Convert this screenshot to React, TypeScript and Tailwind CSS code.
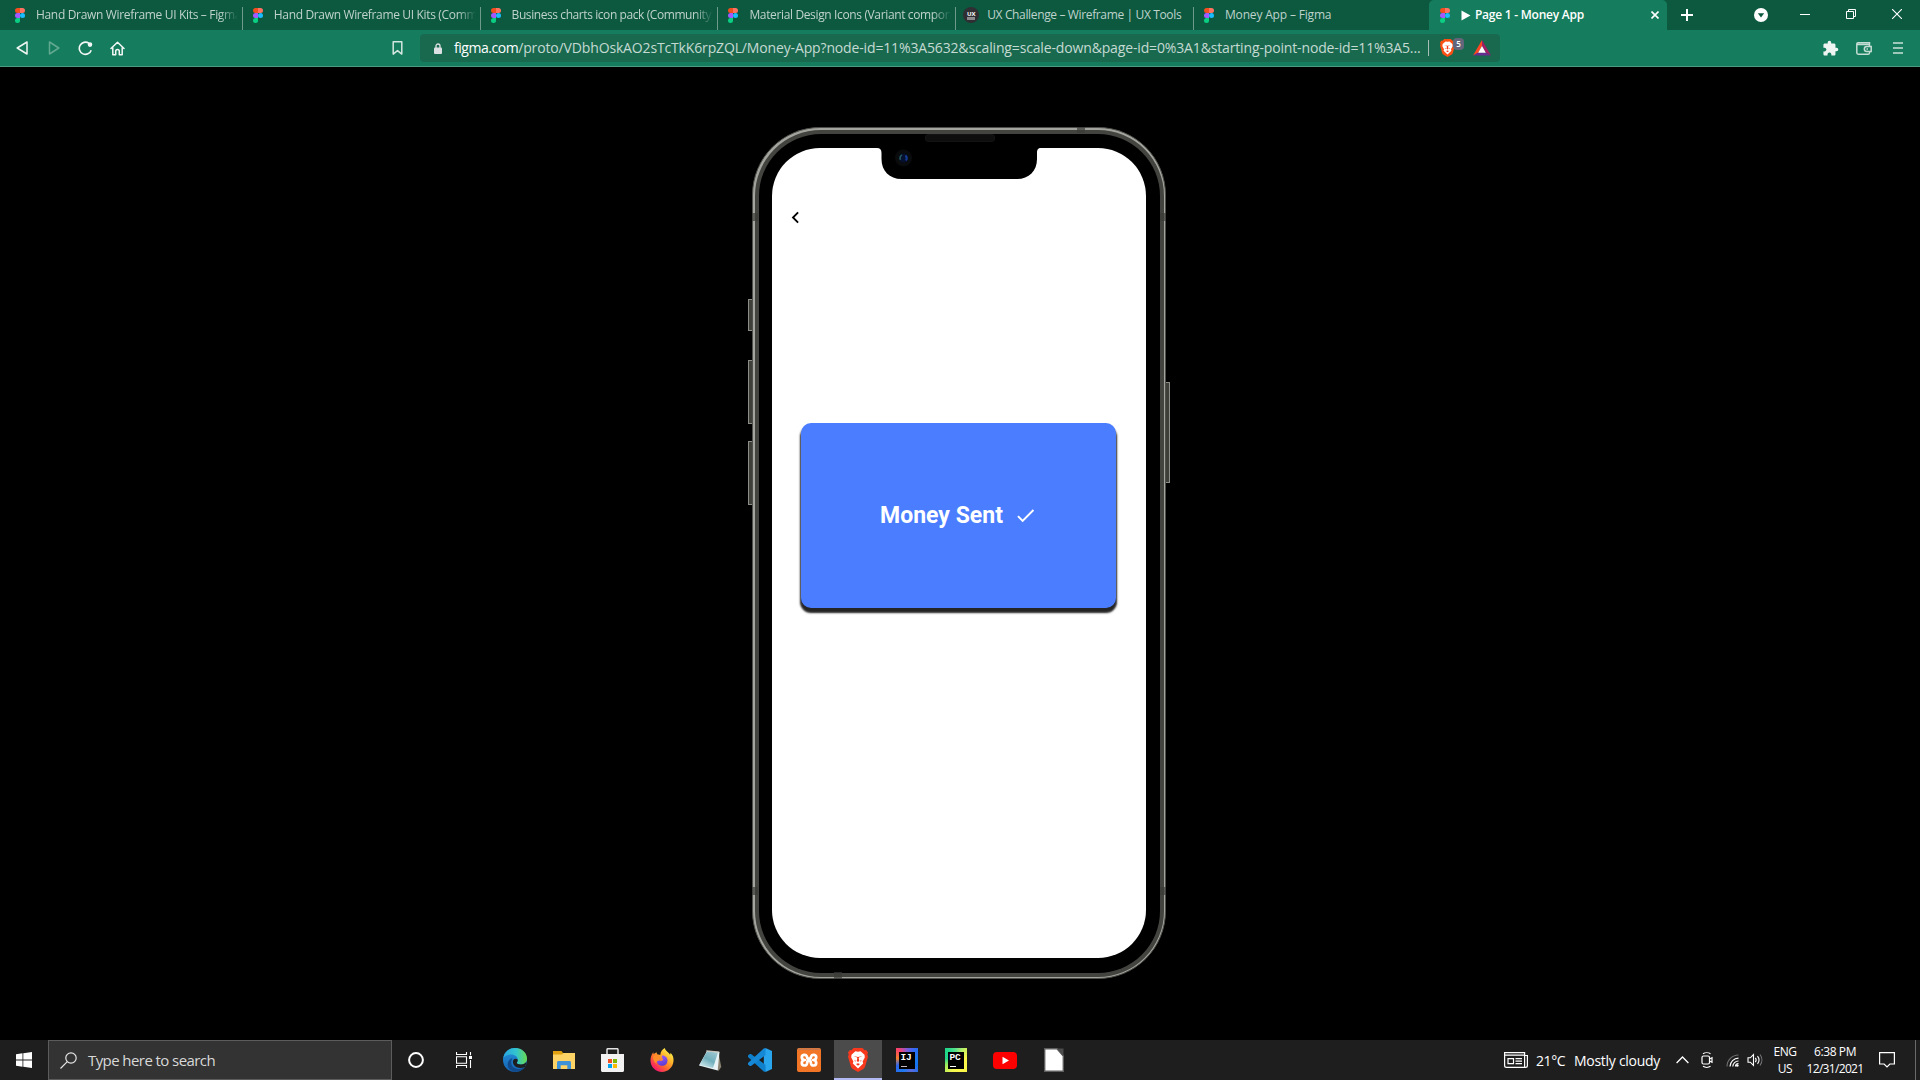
import React from "react";

/* ---------- Browser icons ---------- */

function FigmaLogo() {
  return (
    <svg width="10" height="15" viewBox="0 0 10 15" className="shrink-0">
      <path d="M2.5 0H5v5H2.5a2.5 2.5 0 0 1 0-5z" fill="#f24e1e" />
      <path d="M5 0h2.5a2.5 2.5 0 0 1 0 5H5z" fill="#ff7262" />
      <path d="M2.5 5H5v5H2.5a2.5 2.5 0 0 1 0-5z" fill="#a259ff" />
      <circle cx="7.5" cy="7.5" r="2.5" fill="#1abcfe" />
      <path d="M2.5 10H5v2.5A2.5 2.5 0 1 1 2.5 10z" fill="#0acf83" />
    </svg>
  );
}

function UxToolsLogo() {
  return (
    <span className="flex h-4 w-4 shrink-0 flex-col items-center justify-center rounded-full bg-[#2f2f33] text-[6px] leading-[6px] font-bold text-white">
      <span>UX</span>
      <span className="h-[3px] w-[8px] bg-[#8b8b8e]" />
    </span>
  );
}

function BraveLion({ width, height, light }: { width: number; height: number; light?: boolean }) {
  return (
    <svg width={width} height={height} viewBox="0 0 20 24" className="shrink-0">
      <path
        d="M5.5 0h9l2 2.3 1.6-.2L20 4.6l-.7 2 .7 2.2-2.8 9.4c-.3 1.2-1 2-2 2.7L10 24l-5.2-3.100c-1-.7-1.700-1.500-2-2.700L0 8.800l.7-2.200-.7-2 1.900-2.500 1.600.2z"
        fill={light ? "#fb4f14" : "#f8391d"}
      />
      <path d="M10 3.700l2.600-.5 3.900 3.600.3 2.800-2.200 4 .6 1.900-5.200 5-5.200-5 .6-1.900-2.200-4 .3-2.800 3.900-3.600z" fill="#fff" />
      <path
        d="M5.500 8.300l3.200 1 .6 1-.6 2.800 1.300.9 1.300-.9-.6-2.800.6-1 3.200-1-2.300.2L10 9.100l-2.200-.6zM6.300 12.200l1.700.5-.8 1zM13.700 12.200l-1.700.5.8 1zM8 16l2-.8 2 .8-2 1.700z"
        fill="#f8391d"
      />
    </svg>
  );
}

/* ---------- Tab strip ---------- */

interface Tab {
  title: string;
  tracking: string;
  fade?: boolean;
  ux?: boolean;
  last?: boolean;
}

const tabs: Tab[] = [
  { title: "Hand Drawn Wireframe UI Kits – Figma", tracking: "tracking-[-0.33px]", fade: true },
  { title: "Hand Drawn Wireframe UI Kits (Community)", tracking: "tracking-[-0.34px]", fade: true },
  { title: "Business charts icon pack (Community)", tracking: "tracking-[-0.42px]", fade: true },
  { title: "Material Design Icons (Variant components)", tracking: "tracking-[-0.36px]", fade: true },
  { title: "UX Challenge – Wireframe | UX Tools", tracking: "tracking-[-0.36px]", ux: true },
  { title: "Money App – Figma", tracking: "tracking-[-0.17px]", last: true },
];

function TabStrip() {
  return (
    <div className="flex h-[30px] bg-[#0c5940] pl-[5px]">
      {tabs.map((t) => (
        <div key={t.title} className={`flex shrink-0 items-end ${t.last ? "w-[235px]" : "w-[237.8px]"}`}>
          <div className={`flex h-[30px] min-w-0 flex-1 items-center pr-1 ${t.ux ? "gap-2 pl-[7px]" : "gap-[11px] pl-[10px]"}`}>
            {t.ux ? <UxToolsLogo /> : <FigmaLogo />}
            <span
              className={`flex-1 overflow-hidden text-[12px] leading-[30px] whitespace-nowrap text-[#bfd2cb] ${t.tracking} ${t.fade ? "[mask-image:linear-gradient(to_right,black_91%,transparent)]" : ""}`}
            >
              {t.title}
            </span>
          </div>
          {!t.last && <span className="h-[23px] w-px bg-[#6f9a8b]" />}
        </div>
      ))}
      <div className="flex w-[238px] shrink-0 items-center rounded-t-[5px] bg-[#157d5d] pr-2 pl-[11px]">
        <FigmaLogo />
        <svg width="10" height="11" viewBox="0 0 10 11" className="ml-[11px] shrink-0">
          <path d="M.5.5v10l9-5z" fill="#fff" />
        </svg>
        <span className="ml-1 flex-1 text-[12px] leading-[30px] font-semibold tracking-[-0.24px] whitespace-nowrap text-white">
          Page 1 - Money App
        </span>
        <svg width="8" height="8" viewBox="0 0 8 8" stroke="#fff" strokeWidth="1.6">
          <path d="M.5.5l7 7M7.5.5l-7 7" />
        </svg>
      </div>
      <div className="flex flex-1 items-center">
        <svg width="12" height="12" viewBox="0 0 12 12" className="ml-[14px]" stroke="#fff" strokeWidth="2">
          <path d="M6 0v12M0 6h12" />
        </svg>
        <svg width="14" height="14" viewBox="0 0 14 14" className="ml-[61px]">
          <circle cx="7" cy="7" r="7" fill="#fff" />
          <path d="M3.800 5.200h6.400L7 9.600z" fill="#0c5940" />
        </svg>
        <svg width="10" height="10" viewBox="0 0 10 10" className="ml-8" stroke="#fff">
          <path d="M0 4.500h10" />
        </svg>
        <svg width="10" height="10" viewBox="0 0 10 10" className="mb-[2px] ml-9" stroke="#fff" fill="none">
          <path d="M.5 2.500h7v7h-7zM2.500 2.500v-2h7v7h-2" />
        </svg>
        <svg width="10" height="10" viewBox="0 0 10 10" className="mb-[2px] ml-9" stroke="#fff" strokeWidth="1.1">
          <path d="M0 0l10 10M10 0L0 10" />
        </svg>
      </div>
    </div>
  );
}

/* ---------- Toolbar ---------- */

function Toolbar() {
  return (
    <div className="flex h-[37px] items-center border-b border-[#4a9a80] bg-[#157d5d]">
      <svg width="12" height="14" viewBox="0 0 12 14" className="ml-4" fill="none" stroke="#eef5f2" strokeWidth="1.5" strokeLinejoin="round">
        <path d="M11 1v12L1.200 7z" />
      </svg>
      <svg width="12" height="14" viewBox="0 0 12 14" className="ml-5" fill="none" stroke="#62a891" strokeWidth="1.5" strokeLinejoin="round">
        <path d="M1.500 1v12l9.300-6z" />
      </svg>
      <svg width="15" height="15" viewBox="0 0 15 15" className="ml-[18px]" fill="none" stroke="#f3f8f6" strokeWidth="1.6">
        <path d="M10.800 2.200A6.100 6.100 0 1 0 13.200 9.200" />
        <circle cx="12" cy="3.600" r="1.500" fill="#f3f8f6" />
      </svg>
      <svg width="15" height="15" viewBox="0 0 15 15" className="ml-[17px]" fill="none" stroke="#f3f8f6" strokeWidth="1.5" strokeLinejoin="round" strokeLinecap="round">
        <path d="M1 7.500L7.500 1.200 14 7.500M2.800 6.500v7.300h2.900v-3.500a1.800 1.800 0 0 1 3.600 0v3.500h2.900V6.500" />
      </svg>
      <svg width="11" height="14" viewBox="0 0 11 14" className="ml-[267px]" fill="none" stroke="#d3e6df" strokeWidth="1.5" strokeLinejoin="round">
        <path d="M1.200.8h8.600v12.300L5.500 9.600l-4.300 3.500z" />
      </svg>
      <div className="ml-[17px] flex h-7 w-[1080px] items-center rounded-[4px] bg-[#19694f]">
        <svg width="8" height="11" viewBox="0 0 8 11" className="ml-[14px] shrink-0">
          <path d="M2 5V3a2 2 0 0 1 4 0v2" fill="none" stroke="#dbe1e2" strokeWidth="1.3" />
          <rect y="4.500" width="8" height="6.500" rx="1" fill="#dbe1e2" />
        </svg>
        <span className="ml-3 w-[968px] text-[14px] leading-7 whitespace-nowrap text-[#c5dad2]">
          <span className="tracking-[-0.46px] text-white">figma.com</span>
          <span className="tracking-[-0.148px]">
            /proto/VDbhOskAO2sTcTkK6rpZQL/Money-App?node-id=11%3A5632&amp;scaling=scale-down&amp;page-id=0%3A1&amp;starting-point-node-id=11%3A5...
          </span>
        </span>
        <span className="ml-[6px] h-4 w-px bg-[#a7bfb6]" />
        <div className="relative ml-[11px]">
          <BraveLion width={15} height={18} light />
          <span className="absolute -top-px left-[13px] flex h-3 w-[11px] items-center justify-center rounded-[4px] bg-[#63657a] text-[8px] leading-none font-semibold text-white">
            5
          </span>
        </div>
        <svg width="18" height="16" viewBox="0 0 18 16" className="ml-[18px]">
          <path d="M9 0L0 15.500l5.500-3L9 6z" fill="#ff4724" />
          <path d="M9 0l9 15.500-5.500-3L9 6z" fill="#9e1f63" />
          <path d="M0 15.500l5.500-3h7l5.500 3z" fill="#662d91" />
          <path d="M9 6l3.800 6.700H5.200z" fill="#fff" />
        </svg>
      </div>
      <svg width="17" height="17" viewBox="0 0 24 24" className="ml-[322px]" fill="#eef4f2">
        <path d="M20.500 11H19V7c0-1.100-.9-2-2-2h-4V3.500a2.500 2.500 0 0 0-5 0V5H4c-1.100 0-1.990.9-1.990 2v3.800H3.500c1.490 0 2.700 1.210 2.700 2.700s-1.210 2.700-2.700 2.700H2V20c0 1.100.9 2 2 2h3.800v-1.500c0-1.490 1.210-2.700 2.700-2.700 1.490 0 2.700 1.210 2.700 2.700V22H17c1.100 0 2-.9 2-2v-4h1.500a2.500 2.500 0 0 0 0-5z" />
      </svg>
      <svg width="16" height="14" viewBox="0 0 16 14" className="ml-[17px]" fill="none" stroke="#c4ddd4" strokeWidth="1.5">
        <path d="M13.500 3.500V1.800H2A1.200 1.200 0 0 0 .8 3v8.800c0 .8.600 1.400 1.400 1.400h10c.8 0 1.400-.6 1.400-1.400v-1M1 3.500h12.500v2" />
        <path d="M15.200 5.600h-4.400a2.200 2.200 0 0 0 0 4.900h4.400z" />
        <path d="M10.500 8H12" />
      </svg>
      <svg width="10" height="12" viewBox="0 0 10 12" className="ml-[21px]" stroke="#c9dfd7" strokeWidth="1.6">
        <path d="M0 1h10M0 6h10M0 11h10" />
      </svg>
    </div>
  );
}

/* ---------- Phone ---------- */

function Phone() {
  return (
    <div className="relative h-[852px] w-[414px] rounded-[68px] border border-[#4e4e4a] bg-[#a4a49e] p-[1.5px]">
      {/* side buttons */}
      <span className="absolute top-[171px] -left-[5px] h-8 w-1 border border-r-0 border-[#8d8d87] bg-[#3f3f3a]" />
      <span className="absolute top-[232px] -left-[5px] h-16 w-1 border border-r-0 border-[#8d8d87] bg-[#3f3f3a]" />
      <span className="absolute top-[313px] -left-[5px] h-16 w-1 border border-r-0 border-[#8d8d87] bg-[#3f3f3a]" />
      <span className="absolute top-[254px] -right-[5px] h-[101px] w-1 border border-l-0 border-[#8d8d87] bg-[#3f3f3a]" />
      <div className="h-full rounded-[66px] bg-[#43433f] p-1">
        <div className="h-full rounded-[62px] bg-black px-[13.5px] pt-[14.5px] pb-[14.5px]">
          <div className="relative flex h-full flex-col rounded-[48px] bg-white">
            <svg width="23" height="23" viewBox="0 0 24 24" className="mt-[57.5px] ml-[12px]">
              <path d="M15.410 7.410L14 6l-6 6 6 6 1.410-1.410L10.830 12z" fill="#000" />
            </svg>
            <div className="mt-[194px] ml-[29px] flex h-[185px] w-[315px] items-center justify-center rounded-[10px] bg-[#4a7dff] shadow-[0_4px_2px_1px_rgba(0,0,0,0.86)]">
              <span className="font-[Roboto,sans-serif] text-[23px] leading-none font-bold whitespace-nowrap text-white">Money Sent</span>
              <svg width="23" height="23" viewBox="0 0 24 24" className="ml-[11px]">
                <path d="M9 16.170L4.830 12l-1.420 1.410L9 19 21 7l-1.410-1.410z" fill="#fff" />
              </svg>
            </div>
            {/* notch with front camera */}
            <svg width="164" height="33" viewBox="0 0 164 33" className="absolute -top-px left-[105px]">
              <path d="M0 0h164v1c-3 0-4 1.500-4 5v6c0 12-8 20-20 20H24.500c-12 0-20-8-20-20V6C4.500 2.500 3 1 0 1z" fill="#000" />
              <circle cx="26.500" cy="11" r="8.500" fill="#0a0b0d" />
              <circle cx="26.500" cy="11" r="4.500" fill="#04102e" />
              <path d="M25 7.800a4 4 0 0 0-1.500 5" fill="none" stroke="#25585c" strokeWidth="1.6" />
              <path d="M28.500 8.500a4 4 0 0 1 .5 5" fill="none" stroke="#153b93" strokeWidth="2" />
            </svg>
            <span className="absolute -top-[14px] left-[153px] h-2 w-[70px] rounded-[3px] border border-[#131313] bg-[#0e0e0e]" />
          </div>
        </div>
      </div>
      {/* antenna bands */}
      <span className="absolute top-[85px] -left-px h-2 w-[6px] bg-[#3a3a37]/70" />
      <span className="absolute top-[85px] -right-px h-2 w-[6px] bg-[#3a3a37]/70" />
      <span className="absolute top-[759px] -left-px h-2 w-[6px] bg-[#3a3a37]/70" />
      <span className="absolute top-[759px] -right-px h-2 w-[6px] bg-[#3a3a37]/70" />
      <span className="absolute -top-px left-[324px] h-[6px] w-2 bg-[#3a3a37]/70" />
      <span className="absolute -bottom-px left-[81px] h-[7px] w-2 bg-[#3a3a37]/70" />
    </div>
  );
}

/* ---------- Taskbar icons ---------- */

function EdgeIcon() {
  return (
    <svg width="24" height="24" viewBox="0 0 24 24">
      <defs>
        <linearGradient id="edge-top" x1="0" y1="0.5" x2="1" y2="0.5">
          <stop offset="0" stopColor="#2aa5e0" />
          <stop offset="0.55" stopColor="#32c4cf" />
          <stop offset="1" stopColor="#68db4d" />
        </linearGradient>
        <linearGradient id="edge-left" x1="0" y1="0" x2="0" y2="1">
          <stop offset="0" stopColor="#2494dc" />
          <stop offset="1" stopColor="#1461b2" />
        </linearGradient>
      </defs>
      <circle cx="12" cy="12" r="12" fill="url(#edge-left)" />
      <path d="M.2 10C1.300 4 6 0 12 0c7 0 12 5 12 10.500 0 4-3 6-6.200 6-2.300 0-4-.8-4-1.700 0-.6 1-1.100 1-2.900C14.800 9 12 6.600 8 6.600 4.500 6.600 1.800 8 .2 10z" fill="url(#edge-top)" />
      <path d="M8.500 12.500C7 19 12.500 21.700 17 21c2-.3 4-1.200 4.800-1.900C19.500 22.500 15.500 24 12 24c-4.500-1-7.300-4-7.300-7.500 0-3.400 2-5.400 4.800-6.500-.6.800-.8 1.500-1 2.500z" fill="#114a8b" />
      <path d="M13.800 14.800c0 .9 1.700 1.700 4 1.700 2.500 0 4.700-1 5.700-3-.2 2.200-.8 4-1.700 5.600-6 2.400-12-.6-11.900-5.400 0-1.600 1-3 2.700-3 1.400 0 2.200.8 2.200 1.600 0 1.200-1 1.700-1 2.500z" fill="#1e1e1e" />
    </svg>
  );
}

function ExplorerIcon() {
  return (
    <svg width="22" height="18" viewBox="0 0 22 18">
      <path d="M0 0h8.500L10 2h12v4H0z" fill="#e0a010" />
      <path d="M0 3.500h9L10.500 2H22v16H0z" fill="#fdd365" />
      <path d="M4 18v-6.500c0-.8.700-1.500 1.500-1.500h11c.8 0 1.500.7 1.500 1.500V18h-3.700v-3.700H7.700V18z" fill="#3e93d8" />
    </svg>
  );
}

function StoreIcon() {
  return (
    <svg width="24" height="24" viewBox="0 0 24 24">
      <path d="M6 7V1.700c0-.6.400-1 1-1h9c.6 0 1 .4 1 1V7" fill="none" stroke="#e4e4e4" strokeWidth="1.5" />
      <path d="M0 6h23v16.500c0 .8-.7 1.500-1.500 1.500h-20C.7 24 0 23.300 0 22.500z" fill="#f2f2f2" />
      <path d="M7 11h4v4H7z" fill="#f25022" />
      <path d="M12 11h4v4h-4z" fill="#7fba00" />
      <path d="M7 16h4v4H7z" fill="#00a4ef" />
      <path d="M12 16h4v4h-4z" fill="#ffb900" />
    </svg>
  );
}

function FirefoxIcon() {
  return (
    <svg width="24" height="24" viewBox="0 0 24 24">
      <defs>
        <linearGradient id="ff-body" x1="0.85" y1="0.1" x2="0.2" y2="0.9">
          <stop offset="0" stopColor="#fff24a" />
          <stop offset="0.35" stopColor="#ffb02a" />
          <stop offset="0.65" stopColor="#ff6b2c" />
          <stop offset="1" stopColor="#f5186b" />
        </linearGradient>
        <linearGradient id="ff-globe" x1="0.3" y1="0" x2="0.6" y2="1">
          <stop offset="0" stopColor="#9a5cff" />
          <stop offset="1" stopColor="#5b3ad0" />
        </linearGradient>
      </defs>
      <path d="M14.800 0c.3 2.400 2.400 3.300 4.200 5.200.3.400.8 1 1 1.600.5-.5.5-1.200.4-2 2.500 2 3.400 5 3.100 8.300C23 19.500 18 24 12 24 5.500 24 .5 19 .5 12.600.5 9.500 1.300 7 3.200 4.300c0 .8.200 1.500.7 2 .8-1 1.600-1.500 2.700-2 .1.900.4 1.600 1 2.200 1-.2 2 .1 2.700.6C10.500 4 12.200 1.300 14.800 0z" fill="url(#ff-body)" />
      <path d="M11.900 7.500c3.400-.2 5.600 2.200 5.600 5.200 0 3-2.500 5.100-5.400 5.100-3 0-5.300-2.200-5.300-5 0-1.300.4-2.300 1.200-3.100.9.300 2.100.3 3.100.6-.1 1.300-1.800 1-2 2.200 1.100.9 2.700.5 4-.6-.3-1.500-1.700-2.200-1.200-4.400z" fill="url(#ff-globe)" />
      <path d="M3 8.500c1.700-1.300 4-1.300 5.400.1 1 1 2.700.6 3.300 1.600-.1 1.200-2.500.9-2.700 2.300-2 .4-3.100 1.600-2.300 3.500C4.500 14.500 3 12 3 8.500z" fill="#ff8f2b" />
    </svg>
  );
}

function NotepadIcon() {
  return (
    <svg width="23" height="23" viewBox="0 0 23 23">
      <defs>
        <linearGradient id="note" x1="0.8" y1="0" x2="0.2" y2="1">
          <stop offset="0" stopColor="#9cc6d0" />
          <stop offset="0.5" stopColor="#6faebb" />
          <stop offset="1" stopColor="#d6edf2" />
        </linearGradient>
      </defs>
      <path d="M19.500 3.500l2.800 14.500-3 4-2-2z" fill="#8a8270" />
      <path d="M8 2l12.500 1-1.800 18.500L0 16.500z" fill="#e9f3f5" />
      <path d="M8 2.500l11 1-5 15.500L.5 16z" fill="url(#note)" />
      <path d="M7.500 1.200l12.800 1.200v1.400L7 2.600z" fill="#c9c6bd" />
    </svg>
  );
}

function VsCodeIcon() {
  return (
    <svg width="24" height="24" viewBox="0 0 24 24">
      <path d="M17.500 0L24 3v18l-6.500 3-1.700-6.500v-11z" fill="#29a5ee" />
      <path d="M1.500 6.200L0 7.500v1.400l15.700 14.700 1.800.4v-7L3.300 6.200c-.6-.4-1.300-.4-1.800 0z" fill="#0e80cc" />
      <path d="M1.500 17.800L0 16.500v-1.400L15.700.4l1.800-.4v7L3.300 17.800c-.6.4-1.300.4-1.800 0z" fill="#1689d6" />
    </svg>
  );
}

function XamppIcon() {
  return (
    <svg width="24" height="24" viewBox="0 0 24 24">
      <rect width="24" height="24" rx="2" fill="#f37626" />
      <path d="M1 1.200h22" stroke="#c9794b" strokeWidth="1.8" />
      <path
        d="M9.800 8.300C8.800 6 4.800 6.400 4.800 9.200c0 1.700 1.400 2.800 3 2.800-1.600.2-3 1.300-3 3 0 2.900 4.300 3.500 5.200.6l.5-2.600h3l.5 2.600c.9 2.900 5.200 2.300 5.200-.6 0-1.700-1.400-2.800-3-3 1.600 0 3-1.100 3-2.800 0-2.800-4-3.200-5-.9l-.7 2.400h-3z"
        fill="none"
        stroke="#fff"
        strokeWidth="2.7"
        strokeLinejoin="round"
      />
    </svg>
  );
}

function JetBrainsIcon({ label, variant }: { label: string; variant: "ij" | "pc" }) {
  return (
    <span
      className={`flex h-[24px] w-[22px] items-center justify-center ${
        variant === "ij"
          ? "bg-[conic-gradient(from_0deg,#7d5ad8,#2a6cf5,#1c7af0,#1272f0,#5b6bdc,#1c7af0,#2e65ea,#f5822a,#fc3f6a,#7d5ad8)]"
          : "bg-[conic-gradient(from_0deg,#5fe08c,#c8f060,#fcf84a,#fcf84a,#fcf84a,#f4f850,#a5ec5c,#21d789,#21d789,#5fe08c)]"
      }`}
    >
      <span className="flex h-[17px] w-4 flex-col bg-black pt-[2px] pl-[2px]">
        <span className="font-['Liberation_Mono',monospace] text-[9.5px] leading-[8px] font-bold tracking-[-0.3px] text-white">{label}</span>
        <span className={`mt-[4px] h-px w-[6px] ${variant === "ij" ? "bg-[#c5b7c2]" : "bg-white"}`} />
      </span>
    </span>
  );
}

function YouTubeIcon() {
  return (
    <svg width="24" height="17" viewBox="0 0 24 17">
      <rect width="24" height="17" rx="4" fill="#fd0000" />
      <path d="M9.500 4.800v7.400L16 8.500z" fill="#fff" />
    </svg>
  );
}

function LibreIcon() {
  return (
    <svg width="20" height="24" viewBox="0 0 20 24">
      <path d="M.7.7H13L19.300 8v15.300H.7z" fill="#fff" stroke="#5e5e5e" strokeWidth="1.4" />
      <path d="M13 .5h6.500v7.700z" fill="#4d4d4d" />
    </svg>
  );
}

const pinned: { id: string; icon: React.ReactNode; active?: boolean }[] = [
  { id: "edge", icon: <EdgeIcon /> },
  { id: "explorer", icon: <ExplorerIcon /> },
  { id: "store", icon: <StoreIcon /> },
  { id: "firefox", icon: <FirefoxIcon /> },
  { id: "notepad", icon: <NotepadIcon /> },
  { id: "vscode", icon: <VsCodeIcon /> },
  { id: "xampp", icon: <XamppIcon /> },
  { id: "brave", icon: <BraveLion width={20} height={24} />, active: true },
  { id: "intellij", icon: <JetBrainsIcon label="IJ" variant="ij" /> },
  { id: "pycharm", icon: <JetBrainsIcon label="PC" variant="pc" /> },
  { id: "youtube", icon: <YouTubeIcon /> },
  { id: "libreoffice", icon: <LibreIcon /> },
];

function Taskbar() {
  return (
    <div className="flex h-10 items-center bg-[#1e1e1f] text-white">
      <div className="flex w-12 justify-center">
        <svg width="16" height="16" viewBox="0 0 16 16" fill="#fff">
          <path d="M0 2.200l6.500-.9v6.300H0zM7.300 1.200L16 0v7.600H7.300zM0 8.400h6.500v6.300L0 13.800zM7.300 8.400H16V16l-8.700-1.200z" />
        </svg>
      </div>
      <div className="flex h-10 w-[344px] items-center border border-[#5c5c5c] bg-[#333333]">
        <svg width="17" height="17" viewBox="0 0 17 17" className="ml-[11px]" fill="none" stroke="#e6e6e6" strokeWidth="1.2">
          <circle cx="11" cy="6" r="5.200" />
          <path d="M7.300 9.700L.5 16.500" />
        </svg>
        <span className="ml-[11px] text-[15px] tracking-[-0.58px] text-[#d8d8d8]">Type here to search</span>
      </div>
      <svg width="16" height="16" viewBox="0 0 16 16" className="ml-4" fill="none" stroke="#fff" strokeWidth="2">
        <circle cx="8" cy="8" r="6.900" />
      </svg>
      <svg width="17" height="16" viewBox="0 0 17 16" className="ml-8" fill="none" stroke="#fff" strokeWidth="1.1">
        <path d="M.5 0v2.500h10V0M.5 16v-2.500h10V16M.5 4.800h10v6.400H.5zM14.500 0v3.300M14.500 8v8" />
        <path d="M13 4h3v3h-3z" fill="#fff" stroke="none" />
      </svg>
      <div className="ml-[17px] flex">
        {pinned.map((p) => (
          <div
            key={p.id}
            className={`flex h-10 items-center justify-center ${p.active ? "ml-px w-12 border-b-2 border-[#b3b9f2] bg-[#4b4b4c] pt-0.5" : "w-[49px]"}`}
          >
            {p.icon}
          </div>
        ))}
      </div>
      <div className="flex-1" />
      <svg width="24" height="16" viewBox="0 0 24 16" fill="none" stroke="#fff" strokeWidth="1.2">
        <path d="M.6.6h20v14.800H2.500a1.900 1.900 0 0 1-1.900-1.900zM20.600 3.500h2.800v10a1.900 1.900 0 0 1-1.900 1.900h-2M.6 3.200h20" />
        <path d="M4 6.600h5.500v5H4zM11.500 6.600H18M11.500 9.100H18M11.500 11.600H18" />
      </svg>
      <span className="ml-2 w-[38px] text-[14px] tracking-[-0.4px] whitespace-nowrap">21°C</span>
      <span className="w-[86px] text-[14px] tracking-[-0.28px] whitespace-nowrap">Mostly cloudy</span>
      <svg width="13" height="8" viewBox="0 0 13 8" className="ml-4" fill="none" stroke="#fff" strokeWidth="1.3">
        <path d="M.6 7l5.900-6 5.900 6" />
      </svg>
      <svg width="12" height="16" viewBox="0 0 12 16" className="ml-[12px]" fill="none" stroke="#fff" strokeWidth="1.2">
        <rect x="1" y="4" width="7.500" height="8" rx="1.500" />
        <path d="M8.500 7l2.500-1.300v4.600L8.500 9M2 1.700C4 .4 7.500.4 9.500 1.700M2 14.300c2 1.300 5.500 1.300 7.500 0" />
      </svg>
      <svg width="13" height="13" viewBox="0 0 13 13" className="ml-[13px]" fill="none">
        <path d="M1 12.500A11.500 11.500 0 0 1 12.500 1" stroke="#6f6f70" strokeWidth="1.1" />
        <path d="M4 12.500a8.500 8.500 0 0 1 8.500-8.300M6.800 12.500a5.700 5.700 0 0 1 5.700-5.500" stroke="#fff" strokeWidth="1.2" />
        <path d="M9.500 12.500a3 3 0 0 1 3-3" stroke="#fff" strokeWidth="1.2" />
        <circle cx="11.300" cy="11.500" r="1.300" fill="#fff" />
      </svg>
      <svg width="17" height="14" viewBox="0 0 17 14" className="ml-2" fill="none" stroke="#fff" strokeWidth="1.1">
        <path d="M1 4.800h2.300L6.500 1.500v11L3.300 9.200H1z" />
        <path d="M8.300 4.800a3.500 3.500 0 0 1 0 4.400M10.500 3.200a6 6 0 0 1 0 7.600" />
        <path d="M13 1.500a9 9 0 0 1 0 11" stroke="#77777a" />
      </svg>
      <div className="ml-[9px] flex w-[24px] flex-col items-center text-[12px] leading-[17px] tracking-[-0.4px]">
        <span>ENG</span>
        <span>US</span>
      </div>
      <div className="ml-2 flex w-[60px] flex-col items-center text-[12px] leading-[17px] whitespace-nowrap">
        <span className="tracking-[-0.4px]">6:38 PM</span>
        <span className="tracking-[-0.67px]">12/31/2021</span>
      </div>
      <svg width="16" height="16" viewBox="0 0 16 16" className="ml-[14px]" fill="none" stroke="#fff" strokeWidth="1.2">
        <path d="M.6.6h14.800V12h-4.500L8 15l-2.900-3H.6z" />
      </svg>
      <span className="mr-1 ml-5 h-10 w-px bg-[#6a6a6a]" />
    </div>
  );
}

export default function App() {
  return (
    <div className="flex h-[1080px] w-[1920px] flex-col overflow-hidden bg-black font-['Open_Sans','Noto_Sans',sans-serif]">
      <TabStrip />
      <Toolbar />
      <main className="flex flex-1 justify-center bg-black pt-[60px] pr-[2px]">
        <Phone />
      </main>
      <Taskbar />
    </div>
  );
}
